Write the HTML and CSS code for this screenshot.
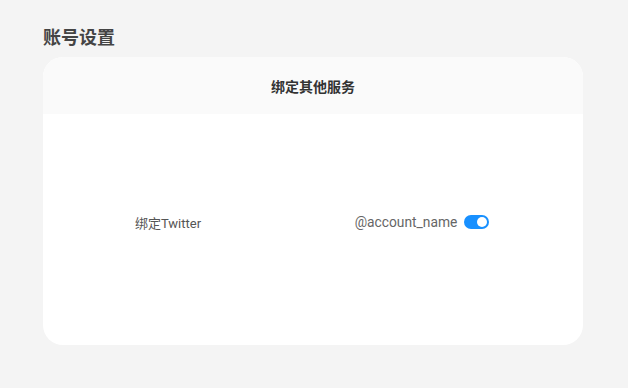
FILE: index.html
```html
<!DOCTYPE html>
<html lang="zh">
<head>
<meta charset="utf-8">
<link rel="stylesheet" href="styles.css">
</head>
<body>
  <main class="page">
    <h1 class="title">账号设置</h1>
    <section class="card">
      <header class="card-head">绑定其他服务</header>
      <div class="card-body">
        <div class="row">
          <div class="cell-label">绑定Twitter</div>
          <div class="cell-value">
            <span class="account">@account_name</span>
            <span class="switch on"><span class="knob"></span></span>
          </div>
        </div>
      </div>
    </section>
  </main>
</body>
</html>
```
FILE: styles.css
```css
* { box-sizing: border-box; }
html, body { margin: 0; padding: 0; }
body {
  background: #f4f4f4;
  font-family: Roboto, "Noto Sans CJK SC", sans-serif;
  color: #555;
  width: 628px;
  height: 388px;
  overflow: hidden;
}
.page {
  padding: 25px 45px 0 43px;
}
.title {
  margin: 0 0 10px 0;
  font-size: 18px;
  line-height: 22px;
  font-weight: 700;
  color: #444;
  font-family: "Noto Sans CJK SC", sans-serif;
}
.card {
  width: 540px;
  height: 288px;
  background: #fff;
  border-radius: 20px;
  overflow: hidden;
  display: flex;
  flex-direction: column;
}
.card-head {
  height: 57px;
  background: #fafafa;
  display: flex;
  align-items: center;
  justify-content: center;
  font-family: "Noto Sans CJK SC", sans-serif;
  font-weight: 700;
  font-size: 14px;
  color: #333;
}
.card-body {
  flex: 1;
  padding-top: 97px;
}
.row {
  display: flex;
  align-items: center;
  height: 22px;
  padding-right: 32px;
}
.cell-label {
  width: 250px;
  text-align: center;
  font-size: 13px;
  color: #555;
  font-family: Roboto, "Noto Sans CJK SC", sans-serif;
}
.cell-value {
  flex: 1;
  display: flex;
  align-items: center;
  justify-content: center;
  gap: 7px;
}
.account {
  font-size: 13.8px;
  color: #666;
}
.switch {
  width: 25px;
  height: 14px;
  border-radius: 7px;
  background: #1890ff;
  position: relative;
  display: inline-block;
}
.knob {
  position: absolute;
  top: 2px;
  right: 2px;
  width: 10px;
  height: 10px;
  border-radius: 50%;
  background: #fff;
}
```
